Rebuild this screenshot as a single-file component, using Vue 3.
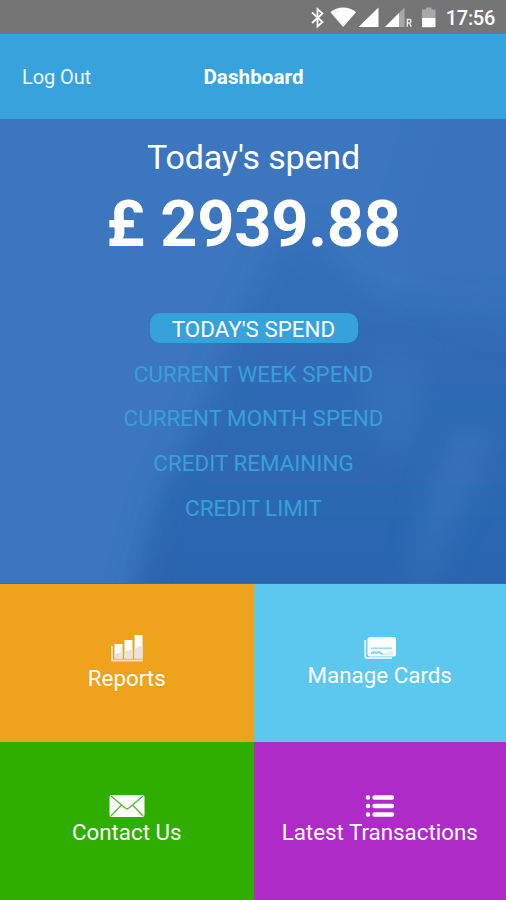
<script setup>
import { ref } from 'vue'

const options = ["TODAY'S SPEND", 'CURRENT WEEK SPEND', 'CURRENT MONTH SPEND', 'CREDIT REMAINING', 'CREDIT LIMIT']
const selected = ref(0)
</script>

<template>
  <div class="screen">
    <div class="status">
      <svg class="status-icons" width="146" height="34" viewBox="296 0 146 34">
        <path d="M312 12.5L322.5 22L317.5 26.5V9L322.5 13.5L312 23" fill="none" stroke="#fff" stroke-width="1.8" />
        <path d="M330.5 12.2C337 5.8 349.5 5.8 356 12.2L343.2 27Z" fill="#fff" />
        <path d="M378.5 7.5V27H358.5Z" fill="#fff" />
        <path d="M404.5 7.5V27H385Z" fill="#a9a9a9" />
        <path d="M399 13V27H385Z" fill="#fff" />
        <path d="M407.300 26.800V19.500H409.500C411.500 19.500 411.500 23 409.500 23H407.300M409.300 23L411.300 26.800" fill="none" stroke="#eee" stroke-width="1.300" />
        <path d="M422 18V9.500H426V7.500H431.500V9.500H435.500V18Z" fill="#a9a9a9" />
        <path d="M422 18H435.500V26.300Q435.500 27.300 434.500 27.300H423Q422 27.300 422 26.300Z" fill="#fff" />
      </svg>
      <span class="clock">17:56</span>
    </div>

    <header class="bar">
      <button class="logout">Log Out</button>
      <h1 class="title">Dashboard</h1>
      <span></span>
    </header>

    <main class="hero">
      <svg class="backdrop" viewBox="0 0 506 465" preserveAspectRatio="none">
        <defs>
          <linearGradient id="shade" x1="0" y1="0" x2="0" y2="1">
            <stop offset="0" stop-color="#346fb9" />
            <stop offset="1" stop-color="#2863af" />
          </linearGradient>
          <filter id="soft" x="-30%" y="-30%" width="160%" height="160%">
            <feGaussianBlur stdDeviation="14" />
          </filter>
        </defs>
        <rect width="506" height="465" fill="#3b76bf" />
        <path d="M274 125L315 112L345 150L385 180L550 190V510H122L158 375L197 300L230 218L256 165Z" fill="url(#shade)" filter="url(#soft)" />
        <path d="M440 -20H540V230L450 195L390 140Z" fill="#346fb8" opacity=".4" filter="url(#soft)" />
        <path d="M378 235L420 240L425 295L408 338L385 335L355 290Z" fill="#3b75be" opacity=".5" filter="url(#soft)" />
        <path d="M452 312L493 305L480 360L445 425L430 465H410L425 385Z" fill="#3e78bf" opacity=".55" filter="url(#soft)" />
      </svg>
      <p class="caption">Today's spend</p>
      <p class="amount">£ 2939.88</p>
      <ul class="options">
        <li
          v-for="(option, i) in options"
          :key="option"
          class="option"
          :class="{ active: i === selected }"
          @click="selected = i"
        >{{ option }}</li>
      </ul>
    </main>

    <nav class="tiles">
      <a class="tile reports">
        <svg width="34" height="28" viewBox="0 0 34 28">
          <path d="M2 11V25.500H33" fill="none" stroke="#f6dfb4" stroke-width="2" />
          <path d="M4.500 9H12.500V23.500H4.500ZM14.500 5H22.500V23.500H14.500ZM24.500 0H32.500V23.500H24.500Z" fill="#fff" />
          <path d="M4.500 19L12.500 17V23.500H4.500ZM14.500 16.500L22.500 14V23.500H14.500ZM24.500 13.500L32.500 10V23.500H24.500Z" fill="#e8e3e1" />
        </svg>
        <span>Reports</span>
      </a>
      <a class="tile cards">
        <svg width="32" height="24" viewBox="0 0 32 24">
          <path d="M1.200 4V20Q1.200 22 3 22H28" fill="none" stroke="#d8f2fc" stroke-width="2" />
          <rect x="3.500" y="1" width="28.500" height="19.500" rx="2.500" fill="#fff" />
          <path d="M7 12.300H28" stroke="#a9d7ee" stroke-width="1.800" />
          <path d="M7 17.500L10 16L12 17L15 16L19 18.500" fill="none" stroke="#91cae8" stroke-width="2" />
          <path d="M19 18L29 14V19.500H19Z" fill="#e3eff8" />
        </svg>
        <span>Manage Cards</span>
      </a>
      <a class="tile contact">
        <svg width="36" height="24" viewBox="0 0 36 24">
          <rect x=".5" y="1" width="35" height="22" rx="2" fill="#fff" />
          <path d="M2 2L15.500 13.500L18 15L20.500 13.500L34 2M2 22L12.500 11M34 22L23.500 11" fill="none" stroke="#55b832" stroke-width="1.300" />
        </svg>
        <span>Contact Us</span>
      </a>
      <a class="tile latest">
        <svg width="30" height="24" viewBox="0 0 30 24">
          <path d="M2.900 3.500H3.100M2.900 12H3.100M2.900 20.500H3.100M9.500 3.500H27M9.500 12H27M9.500 20.500H27" stroke="#fff" stroke-width="4.400" stroke-linecap="round" />
        </svg>
        <span>Latest Transactions</span>
      </a>
    </nav>
  </div>
</template>

<style>
body {
  margin: 0;
}
</style>

<style scoped>
.screen {
  width: 506px;
  height: 900px;
  display: grid;
  grid-template-rows: 34px 85px 465px 316px;
  font-family: Roboto, "Liberation Sans", sans-serif;
  color: #fff;
  overflow: hidden;
}
.status {
  display: flex;
  justify-content: flex-end;
  padding-right: 11px;
  background: #757575;
}
.status-icons {
  flex: none;
}
.clock {
  width: 53px;
  text-align: right;
  font-size: 20px;
  line-height: 37px;
  letter-spacing: -0.3px;
  font-weight: 500;
}
.bar {
  display: grid;
  grid-template-columns: 1fr auto 1fr;
  align-items: center;
  padding: 1px 21px 0 22px;
  background: #37a2db;
}
.logout {
  justify-self: start;
  border: 0;
  padding: 0;
  background: none;
  color: #edf8fd;
  font: 400 20px/24px Roboto, sans-serif;
  letter-spacing: -0.1px;
}
.title {
  margin: 0;
  font-size: 20.700px;
  line-height: 24px;
  font-weight: 700;
}
.hero {
  position: relative;
  display: flex;
  flex-direction: column;
  align-items: center;
  padding: 18px 0 0 1px;
  box-sizing: border-box;
  border-bottom: 1px solid #3b6c9e;
  overflow: hidden;
}
.backdrop {
  position: absolute;
  inset: 0;
  width: 100%;
  height: 100%;
}
.caption,
.amount,
.options {
  position: relative;
  margin: 0;
  white-space: nowrap;
}
.caption {
  font-size: 34px;
  line-height: 40px;
  letter-spacing: -0.150px;
}
.amount {
  margin-top: 8px;
  font-size: 65px;
  line-height: 78px;
  font-weight: 700;
  letter-spacing: -0.300px;
}
.options {
  margin-top: 50.200px;
  padding: 0;
  list-style: none;
  display: flex;
  flex-direction: column;
  align-items: center;
  gap: 14.300px;
}
.option {
  box-sizing: border-box;
  width: 280px;
  height: 30.300px;
  text-align: center;
  font-size: 22.400px;
  line-height: 32.500px;
  color: #37a0dc;
}
.option.active {
  width: 208px;
  border-radius: 10px;
  background: #35a2da;
  color: #fff;
}
.tiles {
  display: grid;
  grid-template-columns: 253.500px 1fr;
  grid-template-rows: 158px 158px;
}
.tile {
  display: flex;
  flex-direction: column;
  align-items: center;
  font-size: 22.350px;
  line-height: 27px;
  white-space: nowrap;
}
.tile span {
  margin-top: 1px;
}
.reports {
  padding-top: 51px;
  background: #efa21b;
}
.tile.reports span {
  margin-top: 2px;
}
.cards {
  padding-top: 52px;
  background: #5dc8ee;
}
.tile.cards span {
  margin-top: 2px;
}
.contact {
  padding-top: 52px;
  background: #2fae00;
}
.latest {
  padding-top: 52px;
  background: #ae2bc7;
}
</style>
